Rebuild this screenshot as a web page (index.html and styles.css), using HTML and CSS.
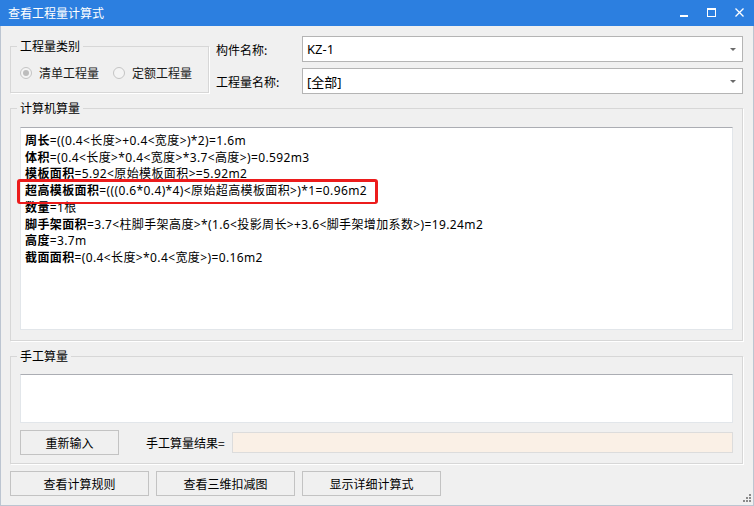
FILE: index.html
```html
<!DOCTYPE html>
<html lang="zh-CN">
<head>
<meta charset="utf-8">
<title>查看工程量计算式</title>
<link rel="stylesheet" href="styles.css">
</head>
<body>
<div class="window">
  <div class="titlebar">
    <span class="title">查看工程量计算式</span>
    <div class="controls">
      <svg class="ctl" width="28" height="26" viewBox="0 0 28 26"><rect x="10" y="15" width="8" height="2" fill="#fff"/></svg>
      <svg class="ctl" width="28" height="26" viewBox="0 0 28 26"><rect x="9.5" y="8.5" width="8" height="8" fill="none" stroke="#fff" stroke-width="1"/><rect x="9" y="8" width="9" height="2" fill="#fff"/></svg>
      <svg class="ctl" width="28" height="26" viewBox="0 0 28 26"><path d="M9.5 8.5 L17.5 16.5 M17.5 8.5 L9.5 16.5" stroke="#fff" stroke-width="1.3" fill="none"/></svg>
    </div>
  </div>
  <div class="frame">
    <div class="top">
      <fieldset class="group g-type">
        <legend>工程量类别</legend>
        <div class="radios">
          <label class="radio"><span class="dot checked"></span>清单工程量</label>
          <label class="radio"><span class="dot"></span>定额工程量</label>
        </div>
      </fieldset>
      <div class="fields">
        <span class="flabel">构件名称:</span>
        <div class="combo"><span>KZ-1</span><span class="arrow"></span></div>
        <span class="flabel">工程量名称:</span>
        <div class="combo"><span>[全部]</span><span class="arrow"></span></div>
      </div>
    </div>

    <fieldset class="group g-calc">
      <legend>计算机算量</legend>
      <div class="textbox calc">
        <div class="line"><b>周长</b>=((0.4&lt;长度&gt;+0.4&lt;宽度&gt;)*2)=1.6m</div>
        <div class="line"><b>体积</b>=(0.4&lt;长度&gt;*0.4&lt;宽度&gt;*3.7&lt;高度&gt;)=0.592m3</div>
        <div class="line"><b>模板面积</b>=5.92&lt;原始模板面积&gt;=5.92m2</div>
        <div class="line"><span class="hl"><b>超高模板面积</b>=(((0.6*0.4)*4)&lt;原始超高模板面积&gt;)*1=0.96m2</span></div>
        <div class="line"><b>数量</b>=1根</div>
        <div class="line"><b>脚手架面积</b>=3.7&lt;柱脚手架高度&gt;*(1.6&lt;投影周长&gt;+3.6&lt;脚手架增加系数&gt;)=19.24m2</div>
        <div class="line"><b>高度</b>=3.7m</div>
        <div class="line"><b>截面面积</b>=(0.4&lt;长度&gt;*0.4&lt;宽度&gt;)=0.16m2</div>
      </div>
    </fieldset>

    <fieldset class="group g-manual">
      <legend>手工算量</legend>
      <div class="textbox manual"></div>
      <div class="manual-row">
        <button class="btn btn-reset">重新输入</button>
        <span class="result-label">手工算量结果=</span>
        <div class="result"></div>
      </div>
    </fieldset>

    <div class="actions">
      <button class="btn btn-wide">查看计算规则</button>
      <button class="btn btn-wide">查看三维扣减图</button>
      <button class="btn btn-wide">显示详细计算式</button>
    </div>
    <div class="grip">
      <svg width="9" height="9" viewBox="0 0 9 9"><g fill="#8a8a8a"><rect x="6" y="0" width="2" height="2"/><rect x="3" y="3" width="2" height="2"/><rect x="6" y="3" width="2" height="2"/><rect x="0" y="6" width="2" height="2"/><rect x="3" y="6" width="2" height="2"/><rect x="6" y="6" width="2" height="2"/></g></svg>
    </div>
  </div>
</div>
</body>
</html>
```
FILE: styles.css
```css
* { box-sizing: border-box; }
html, body { margin: 0; padding: 0; }
body {
  font-family: "Noto Sans CJK SC", "Noto Sans", sans-serif;
  font-size: 12px;
  color: #000;
  background: #f0f0f0;
}
.window {
  width: 754px;
  height: 506px;
  display: flex;
  flex-direction: column;
  background: #f0f0f0;
}
.titlebar {
  height: 26px;
  flex: none;
  background: #2c7fe0;
  display: flex;
  align-items: center;
  padding-left: 8px;
}
.title {
  color: #fff;
  font-size: 12px;
  line-height: 14px;
}
.controls {
  margin-left: auto;
  display: flex;
}
.ctl { display: block; }
.frame {
  flex: 1;
  position: relative;
  border-left: 1px solid #bcc5d1;
  border-right: 1px solid #bcc5d1;
  border-bottom: 1px solid #bcc5d1;
  padding: 10px 10px 0 9px;
}
.top {
  display: flex;
  align-items: flex-start;
  height: 58px;
}
.group {
  margin: 0;
  padding: 0 9px;
  border: 1px solid #d7d7d7;
  box-shadow: 1px 1px 0 #fff;
  min-width: 0;
}
.group legend {
  padding: 0 3px;
  margin-left: -3px;
  line-height: 14px;
  font-size: 12px;
}
.g-type {
  margin-top: 3px;
  width: 199px;
  height: 54px;
  flex: none;
}
.radios {
  display: flex;
  align-items: center;
  margin-top: 13px;
  line-height: 14px;
}
.radio {
  display: flex;
  align-items: center;
  color: #1a1a1a;
}
.radio + .radio { margin-left: 14px; }
.dot {
  width: 12px;
  height: 12px;
  border-radius: 50%;
  border: 1px solid #c4c4c4;
  background: #f4f4f4;
  margin-right: 7px;
  display: flex;
  align-items: center;
  justify-content: center;
}
.dot.checked::before {
  content: "";
  width: 6px;
  height: 6px;
  border-radius: 50%;
  background: #bdbdbd;
}
.fields {
  margin-left: 7px;
  display: grid;
  grid-template-columns: 86px 441px;
  grid-auto-rows: 26px;
  row-gap: 6px;
  align-items: center;
}
.flabel { line-height: 14px; padding-top: 2px; }
.combo {
  height: 26px;
  border: 1px solid #b4b4b4;
  background: #fff;
  display: flex;
  align-items: center;
  padding-left: 4px;
  padding-right: 6px;
  font-family: "Noto Sans", "Noto Sans CJK SC", sans-serif;
  font-size: 13px;
}
.arrow {
  margin-left: auto;
  width: 0;
  height: 0;
  border-left: 3px solid transparent;
  border-right: 3px solid transparent;
  border-top: 3px solid #6a6a6a;
  margin-top: 1px;
}
.g-calc {
  margin-top: 7px;
  height: 240px;
  padding-bottom: 10px;
}
.textbox {
  background: #fff;
  border: 1px solid #e2e6ea;
  border-top-color: #abadb3;
}
.calc {
  margin-top: 12px;
  height: 203px;
  padding: 5px 4px 0;
  font-family: "Noto Sans", "Noto Sans CJK SC", sans-serif;
  letter-spacing: 0.38px;
}
.line {
  line-height: 16.7px;
  white-space: nowrap;
}
.line b { font-weight: bold; }
.hl {
  position: relative;
  display: inline-block;
  vertical-align: top;
}
.hl::after {
  content: "";
  position: absolute;
  left: -8px;
  top: -4px;
  width: 355px;
  height: 20px;
  border: 3px solid #ec1c1c;
  border-bottom-width: 2px;
  border-radius: 3px;
}
.g-manual {
  margin-top: 8px;
  height: 115px;
  padding-bottom: 8px;
}
.manual {
  margin-top: 11px;
  height: 49px;
}
.manual-row {
  margin-top: 7px;
  display: flex;
  align-items: center;
}
.btn {
  font-family: inherit;
  font-size: 12px;
  color: #000;
  background: #f0f0f0;
  border: 1px solid #c3c3c3;
  height: 25px;
  padding: 0;
  margin: 0;
}
.btn-reset { width: 99px; }
.result-label { margin-left: 27px; }
.result {
  margin-left: 7px;
  flex: 1;
  height: 21px;
  background: #faf0e6;
  border: 1px solid #dcdcdc;
}
.actions {
  margin-top: 7px;
  display: flex;
  gap: 7px;
}
.btn-wide { width: 139px; }
.grip {
  position: absolute;
  right: 1px;
  bottom: 2px;
  line-height: 0;
}
```
